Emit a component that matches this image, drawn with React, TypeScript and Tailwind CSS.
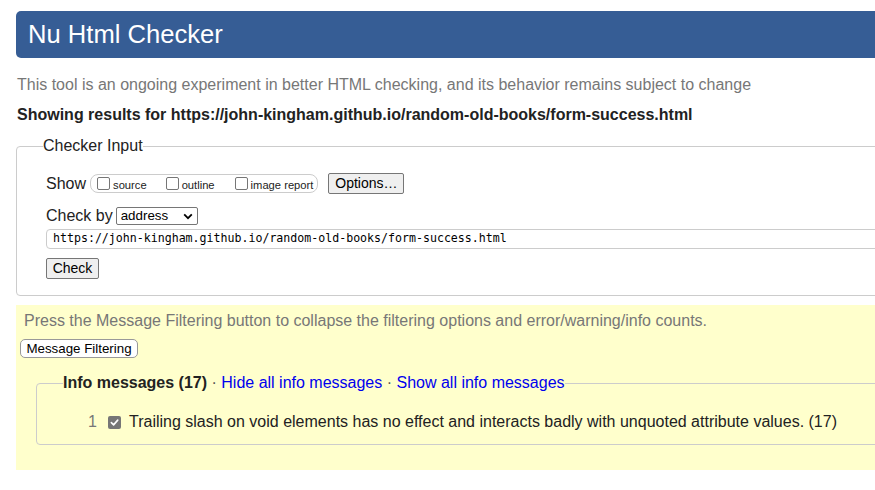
import React from "react";

function Box({ checked = false }: { checked?: boolean }) {
  if (checked) {
    return (
      <span className="flex h-[13px] w-[13px] shrink-0 items-center justify-center rounded-[2px] bg-[#767676]">
        <svg width="9" height="9" viewBox="0 0 10 10" fill="none">
          <path d="M1.5 5.2 L4 7.6 L8.6 2.4" stroke="#fff" strokeWidth="1.8" strokeLinecap="round" strokeLinejoin="round" />
        </svg>
      </span>
    );
  }
  return <span className="block h-[13px] w-[13px] shrink-0 rounded-[2px] border border-[#767676] bg-white" />;
}

export default function App() {
  return (
    <div className="min-h-[490px] w-full overflow-hidden bg-white font-['Liberation_Sans',Arial,sans-serif] text-[16px] text-[#222]">
      <div className="ml-4 w-[900px] pt-[11px]">
        <header className="flex h-[47px] items-center rounded-[5px] bg-[#365d95] pl-3 text-[25.6px] text-white">
          Nu Html Checker
        </header>

        <p className="mt-[18px] pl-[1px] leading-[18px] text-[#777]">
          This tool is an ongoing experiment in better HTML checking, and its behavior remains subject to change
        </p>
        <p className="mt-[12px] pl-[1px] font-bold leading-[18px]">
          Showing results for https://john-kingham.github.io/random-old-books/form-success.html
        </p>

        <fieldset className="mt-[13px] rounded-[4px] border border-[#ccc] pb-[16px] pl-[26px]">
          <legend className="px-0 leading-[18px]">Checker Input</legend>
          <div className="ml-[3px] mt-[18px] flex h-[21px] items-center">
            <span>Show</span>
            <div className="ml-[4px] flex h-[19px] items-center rounded-[8px] border border-[#ccc] pl-[6px] pr-[4px] text-[11.2px]">
              <Box />
              <span className="ml-[3px] mt-[3px]">source</span>
              <span className="ml-[19px] flex"><Box /></span>
              <span className="ml-[3px] mt-[3px]">outline</span>
              <span className="ml-[20px] flex"><Box /></span>
              <span className="ml-[3px] mt-[3px]">image report</span>
            </div>
            <button className="ml-[10px] flex h-[21px] w-[76px] items-center justify-center rounded-[2px] border border-[#767676] bg-[#efefef] text-[14px] text-black">
              Options…
            </button>
          </div>

          <div className="ml-[3px] mt-[13px] flex h-[18px] items-center">
            <span>Check by</span>
            <div className="ml-[3px] flex h-[18px] w-[82px] items-center justify-between rounded-[2px] border border-[#767676] pl-[4px] pr-[4px] text-[13.33px] text-black">
              <span>address</span>
              <svg width="10" height="7" viewBox="0 0 10 7" fill="none">
                <path d="M1.2 1.4 L5 5.2 L8.8 1.4" stroke="#000" strokeWidth="1.8" />
              </svg>
            </div>
          </div>

          <div className="ml-[3px] mt-[4px] flex h-[20px] items-center rounded-[4px] border border-[#ccc] pl-[6px] font-['DejaVu_Sans_Mono',monospace] text-[11.6px] text-black">
            https://john-kingham.github.io/random-old-books/form-success.html
          </div>

          <button className="ml-[3px] mt-[9px] flex h-[21px] w-[53px] items-center justify-center rounded-[2px] border border-[#767676] bg-[#efefef] text-[14px] text-black">
            Check
          </button>
        </fieldset>

        <section className="mt-[9px] bg-[#ffffcc] pb-[25px] pt-[7px]">
          <p className="pl-[8px] leading-[18px] text-[#777]">
            Press the Message Filtering button to collapse the filtering options and error/warning/info counts.
          </p>
          <button className="ml-[4px] mt-[9px] flex h-[19px] w-[118px] items-center justify-center rounded-[5px] border border-[#999] bg-white text-[13.33px] text-black">
            Message Filtering
          </button>

          <fieldset className="ml-[20px] mt-[16px] rounded-[4px] border border-[#ccc] pb-[13px] pl-[26px]">
            <legend className="px-0 leading-[18px]">
              <span className="font-bold">Info messages (17)</span>
              <span className="text-[#555]"> · </span>
              <a className="text-[#0000ee]">Hide all info messages</a>
              <span className="text-[#555]"> · </span>
              <a className="text-[#0000ee]">Show all info messages</a>
            </legend>
            <div className="mt-[21px] flex h-[18px] items-center">
              <span className="ml-[25px] w-[9px] text-[#777]">1</span>
              <span className="ml-[11px] flex"><Box checked /></span>
              <span className="ml-[8px]">
                Trailing slash on void elements has no effect and interacts badly with unquoted attribute values. (17)
              </span>
            </div>
          </fieldset>
        </section>
      </div>
    </div>
  );
}
